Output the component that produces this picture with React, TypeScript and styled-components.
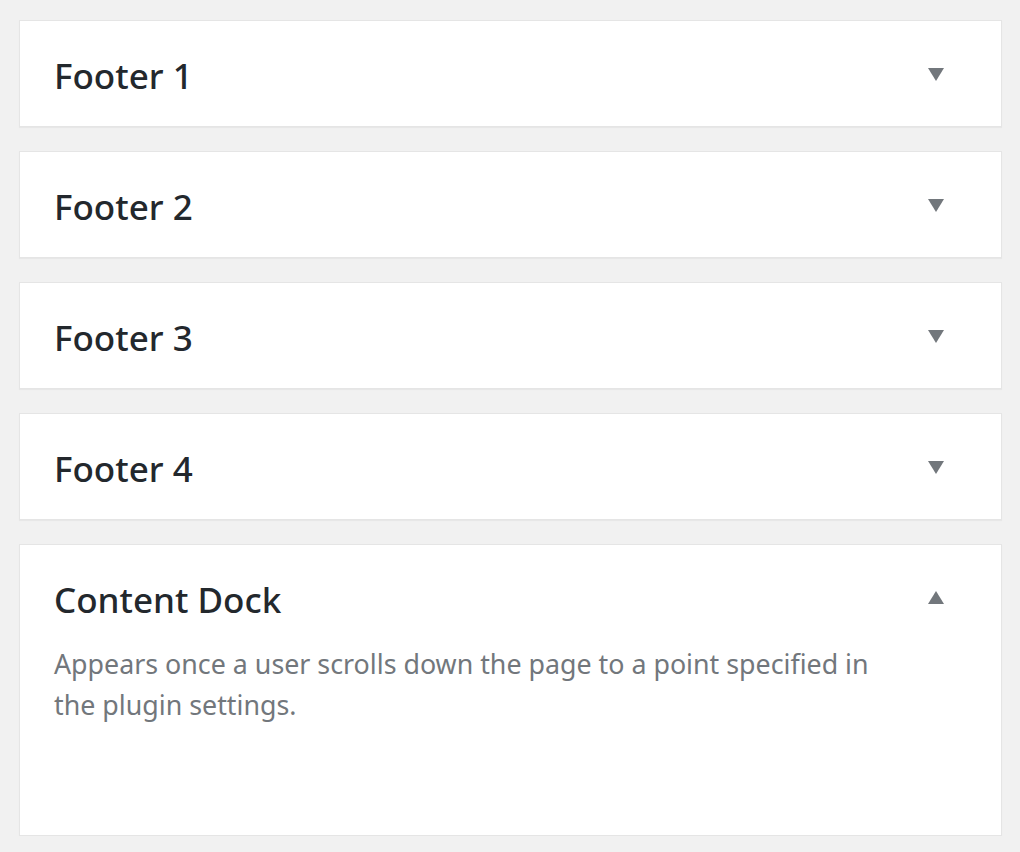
import styled, { createGlobalStyle } from "styled-components";

const GlobalStyle = createGlobalStyle`
  html, body {
    margin: 0;
    padding: 0;
    background: #f1f1f1;
  }
  body {
    font-family: "Noto Sans", "Open Sans", sans-serif;
  }
`;

const Page = styled.div`
  display: flex;
  flex-direction: column;
  gap: 24px;
  padding: 20px 18px 0 19px;
`;

const Card = styled.div`
  background: #fff;
  border: 1px solid #e5e5e5;
  box-shadow: 0 1px 1px rgba(0, 0, 0, 0.04);
`;

const Header = styled.div`
  display: flex;
  align-items: center;
  justify-content: space-between;
  height: 105px;
  padding: 0 57px 0 34px;
`;

const Title = styled.h3`
  margin: 0;
  font-size: 35px;
  font-weight: 500;
  color: #23282d;
  line-height: 1;
  padding-top: 3px;
`;

const Arrow = styled.span<{ $open?: boolean }>`
  width: 0;
  height: 0;
  border-left: 8.5px solid transparent;
  border-right: 8.5px solid transparent;
  ${({ $open }) =>
    $open
      ? "border-bottom: 13px solid #72777c;"
      : "border-top: 13px solid #72777c;"}
  margin-top: ${({ $open }) => ($open ? "0" : "2px")};
`;

const Description = styled.p`
  margin: -7px 0 0;
  padding: 0 110px 110px 34px;
  font-size: 26.8px;
  line-height: 41px;
  color: #72777c;
`;

interface Area {
  title: string;
  desc?: string;
}

const areas: Area[] = [
  { title: "Footer 1" },
  { title: "Footer 2" },
  { title: "Footer 3" },
  { title: "Footer 4" },
  {
    title: "Content Dock",
    desc: "Appears once a user scrolls down the page to a point specified in the plugin settings.",
  },
];

const WidgetArea = ({ title, desc }: Area) => (
  <Card>
    <Header>
      <Title>{title}</Title>
      <Arrow $open={!!desc} />
    </Header>
    {desc ? <Description>{desc}</Description> : null}
  </Card>
);

export default function App() {
  return (
    <>
      <GlobalStyle />
      <Page>
        {areas.map((a) => (
          <WidgetArea key={a.title} {...a} />
        ))}
      </Page>
    </>
  );
}
